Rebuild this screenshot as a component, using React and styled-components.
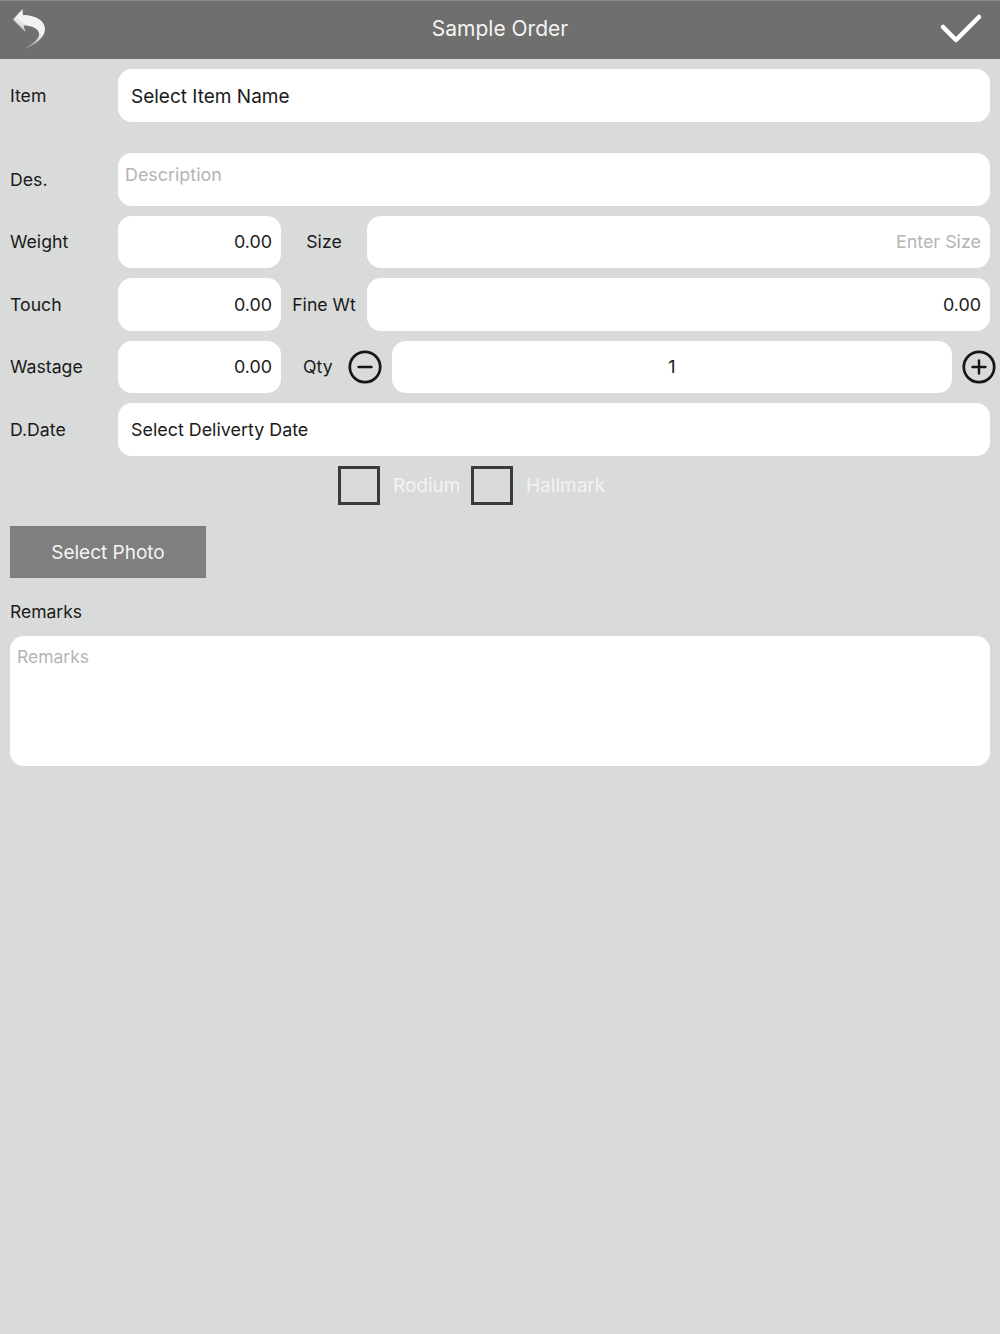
import React from 'react'
import styled, { createGlobalStyle } from 'styled-components'

const GlobalStyle = createGlobalStyle`
  html, body {
    margin: 0;
    padding: 0;
    background: #d9dbda;
  }
  body {
    font-family: Inter, "Liberation Sans", sans-serif;
    color: #1a1a1a;
  }
`

const Page = styled.div`
  width: 1000px;
  height: 1334px;
  background: #d9dbda;
  overflow: hidden;
`

const Header = styled.header`
  height: 59px;
  box-sizing: border-box;
  border-top: 1px solid #8b8b8a;
  background: #6f6f6d;
  display: flex;
  align-items: center;
  justify-content: space-between;
  padding: 0 17px 3px 10px;
`

const HeaderSlot = styled.div`
  flex: none;
  width: 60px;
  display: flex;
  justify-content: ${p => (p.$end ? 'flex-end' : 'flex-start')};
`

const HeaderIcon = styled.svg`
  display: block;
  flex: none;
`

const BackGlyph = styled(HeaderIcon)`
  margin-top: -2px;
`

const Title = styled.h1`
  flex: 1;
  margin: 0 0 0 7px;
  text-align: center;
  font-size: 21px;
  font-weight: 400;
  color: #f4f4f4;
`

const Form = styled.main`
  padding: 10.2px 10px 0;
  display: flex;
  flex-direction: column;
`

const Row = styled.div`
  display: flex;
  align-items: center;
  height: 52.5px;
  margin-bottom: ${p => p.$gap ?? 10}px;
`

const Label = styled.label`
  flex: none;
  width: 108px;
  font-size: 17.7px;
`

const MidLabel = styled.label`
  flex: none;
  width: 86px;
  text-align: center;
  font-size: 17.7px;
`

const QtyLabel = styled(MidLabel)`
  width: 45px;
  padding-left: 22px;
  text-align: left;
`

const Field = styled.div`
  flex: ${p => (p.$small ? 'none' : 1)};
  width: ${p => (p.$small ? '163px' : 'auto')};
  height: 100%;
  box-sizing: border-box;
  display: flex;
  align-items: center;
  justify-content: ${p => p.$justify || 'flex-start'};
  padding: 0 ${p => p.$pad ?? 9}px;
  background: #fff;
  border-radius: 14px;
  font-size: ${p => p.$size || 17.9}px;
  color: ${p => (p.$placeholder ? '#b4b4b4' : '#1a1a1a')};
`

const ItemField = styled(Field)`
  padding-top: 2px;
`

const DescriptionField = styled(Field)`
  align-items: flex-start;
  padding: 11px 7px 0;
`

const RoundButton = styled.button`
  flex: none;
  width: 34px;
  height: 34px;
  padding: 0;
  border: 0;
  background: none;
  color: #161616;
`

const MinusButton = styled(RoundButton)`
  margin-right: 10px;
`

const PlusButton = styled(RoundButton)`
  margin: 0 -6px 0 10px;
`

const CircleSvg = styled.svg`
  display: block;
`

const ChecksRow = styled.div`
  display: flex;
  align-items: center;
  height: 39px;
  padding-left: 328px;
  margin-bottom: 21px;
`

const CheckBox = styled.span`
  flex: none;
  width: 42px;
  height: 39px;
  box-sizing: border-box;
  border: 3px solid #3a3a3a;
`

const CheckText = styled.span`
  flex: none;
  font-size: 19px;
  color: #f2f3f3;
  margin-left: 13px;
  width: ${p => (p.$width ? `${p.$width}px` : 'auto')};
`

const PhotoButton = styled.button`
  display: block;
  width: 196px;
  height: 52px;
  padding: 2px 0 0;
  border: 0;
  background: #7f7f7f;
  color: #f4f4f4;
  font: inherit;
  font-size: 19px;
`

const RemarksLabel = styled.div`
  margin: 23px 0 13px;
  font-size: 17.5px;
  line-height: 22px;
`

const RemarksBox = styled.div`
  height: 130.5px;
  box-sizing: border-box;
  padding: 10px 7px;
  background: #fff;
  border-radius: 14px;
  font-size: 17.5px;
  line-height: 22px;
  color: #b4b4b4;
`

const BackIcon = () => (
  <BackGlyph width="40" height="52" viewBox="0 0 40 52">
    <defs>
      <linearGradient id="tail" x1="0.6" y1="0.45" x2="0.3" y2="1">
        <stop offset="0" stopColor="#f2f2f2" />
        <stop offset="1" stopColor="#f2f2f2" stopOpacity="0.15" />
      </linearGradient>
    </defs>
    <path
      d="M3 17.5 L12.5 7 L13 13 C24 13 35 18 35 27 C35 35 26 43 14 47 C23 42 30 36 29 31 C28 26 21 23.5 13.5 23.5 L15.5 30 Z"
      fill="url(#tail)"
    />
  </BackGlyph>
)

const CheckIcon = () => (
  <HeaderIcon width="44" height="32" viewBox="0 0 44 32">
    <path d="M4 14 L17 27 L40 4" fill="none" stroke="#fff" strokeWidth="4.5" strokeLinecap="round" strokeLinejoin="round" />
  </HeaderIcon>
)

const CircleIcon = ({ plus }) => (
  <CircleSvg width="34" height="34" viewBox="0 0 34 34" fill="none" stroke="currentColor" strokeLinecap="round">
    <circle cx="17" cy="17" r="15.2" strokeWidth="2.7" />
    <path d="M10.5 17 H23.5" strokeWidth="2.4" />
    {plus && <path d="M17 10.5 V23.5" strokeWidth="2.4" />}
  </CircleSvg>
)

export default function App() {
  return (
    <Page>
      <GlobalStyle />
      <Header>
        <HeaderSlot><BackIcon /></HeaderSlot>
        <Title>Sample Order</Title>
        <HeaderSlot $end><CheckIcon /></HeaderSlot>
      </Header>
      <Form>
        <Row $gap={31.5}>
          <Label>Item</Label>
          <ItemField $pad={13} $size={19}>Select Item Name</ItemField>
        </Row>
        <Row>
          <Label>Des.</Label>
          <DescriptionField $placeholder>Description</DescriptionField>
        </Row>
        <Row>
          <Label>Weight</Label>
          <Field $small $justify="flex-end">0.00</Field>
          <MidLabel>Size</MidLabel>
          <Field $placeholder $justify="flex-end">Enter Size</Field>
        </Row>
        <Row>
          <Label>Touch</Label>
          <Field $small $justify="flex-end">0.00</Field>
          <MidLabel>Fine Wt</MidLabel>
          <Field $justify="flex-end">0.00</Field>
        </Row>
        <Row>
          <Label>Wastage</Label>
          <Field $small $justify="flex-end">0.00</Field>
          <QtyLabel>Qty</QtyLabel>
          <MinusButton aria-label="Decrease"><CircleIcon /></MinusButton>
          <Field $justify="center">1</Field>
          <PlusButton aria-label="Increase"><CircleIcon plus /></PlusButton>
        </Row>
        <Row>
          <Label>D.Date</Label>
          <Field $pad={13}>Select Deliverty Date</Field>
        </Row>
        <ChecksRow>
          <CheckBox />
          <CheckText $width={78}>Rodium</CheckText>
          <CheckBox />
          <CheckText>Hallmark</CheckText>
        </ChecksRow>
        <div>
          <PhotoButton>Select Photo</PhotoButton>
        </div>
        <RemarksLabel>Remarks</RemarksLabel>
        <RemarksBox>Remarks</RemarksBox>
      </Form>
    </Page>
  )
}
